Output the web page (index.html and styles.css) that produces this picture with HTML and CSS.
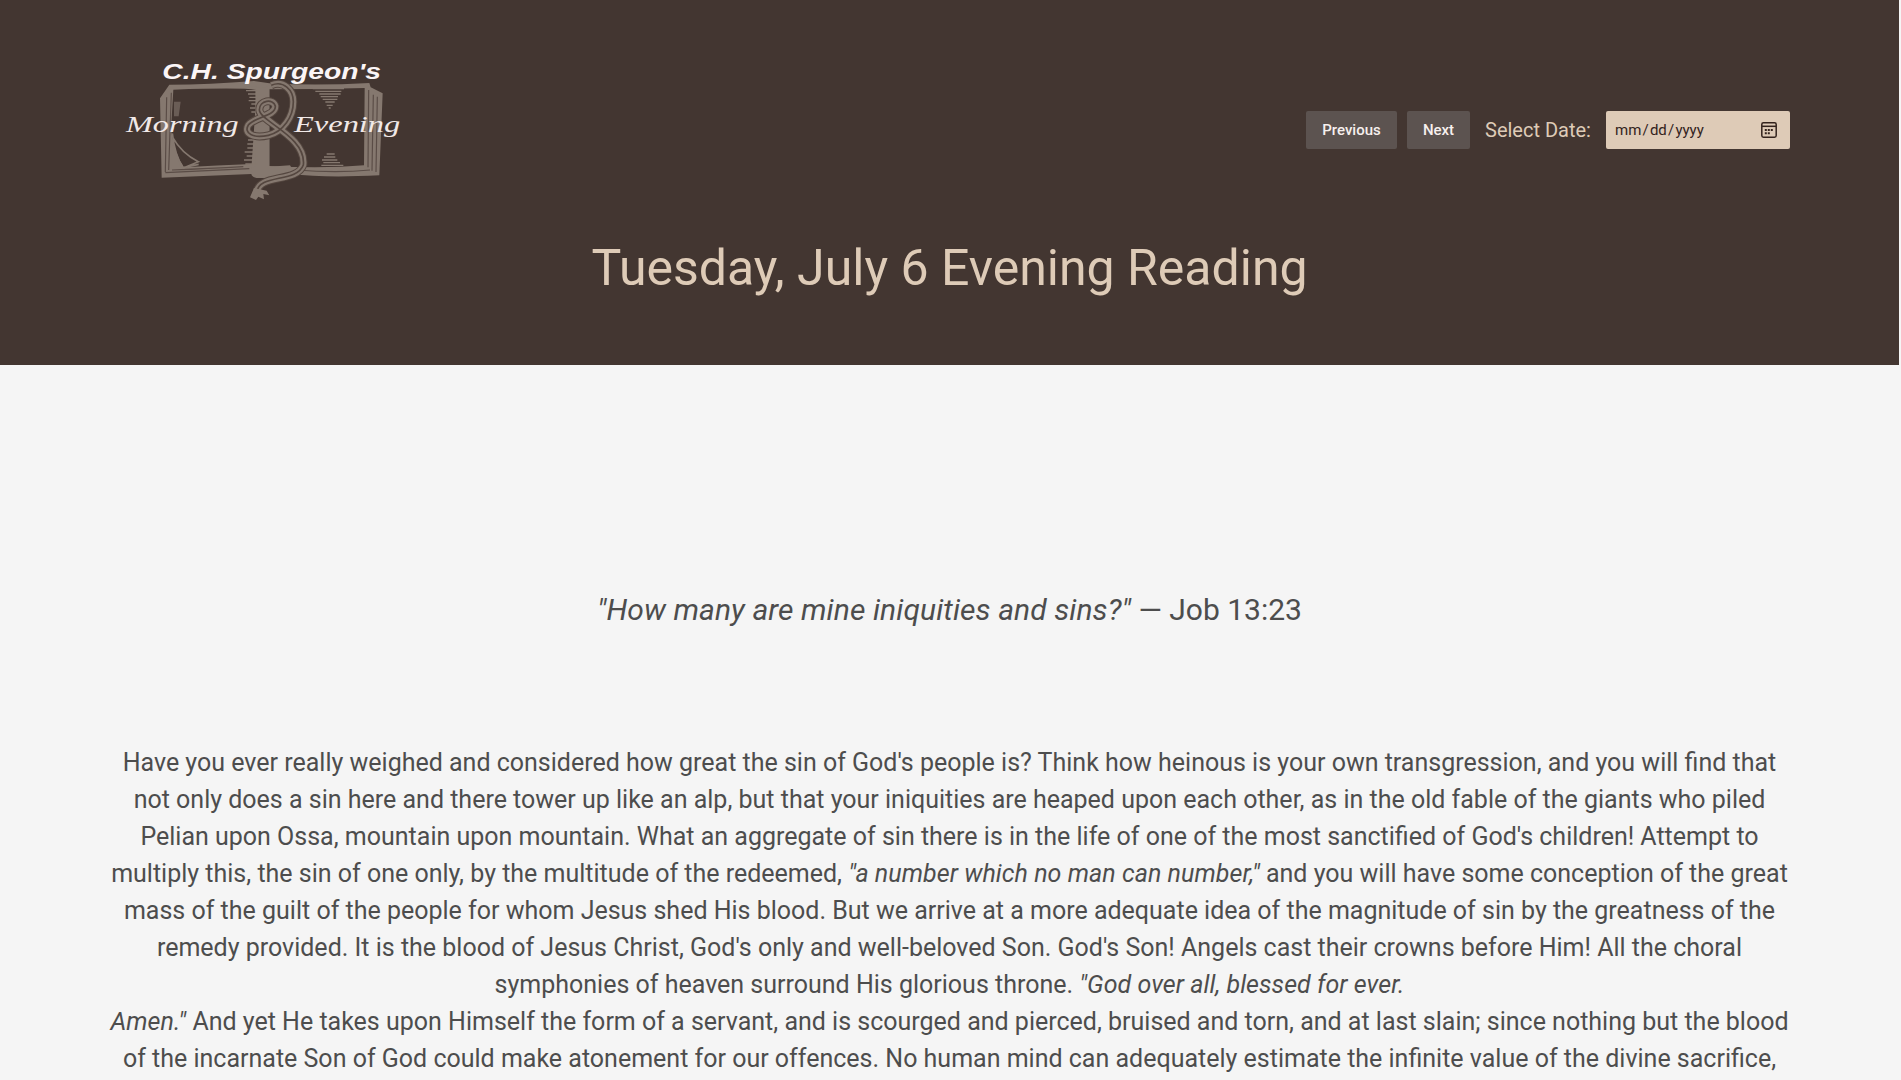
FILE: index.html
```html
<!DOCTYPE html>
<html lang="en">
<head>
<meta charset="utf-8">
<title>Morning and Evening</title>
<link rel="stylesheet" href="styles.css">
</head>
<body>
<header class="header">
  <div class="bar">
    <svg class="logo" viewBox="0 0 930 480" role="img" aria-label="C.H. Spurgeon's Morning &amp; Evening">
      <g class="book">
        <path class="fill" d="M150 145L178 104Q300 104 432 93L478 100Q620 108 778 99L782 112L818 130L808 376Q640 384 545 372Q530 384 450 384Q425 384 424 372L155 383ZM190 119L183 240Q195 315 222 352Q320 346 425 342L440 120Q400 112 190 119ZM478 118V348Q640 356 762 346L764 114Q620 118 478 118Z" fill-rule="evenodd"/>
        <path class="groove" d="M170 142L166 366M184 128L176 360M166 368Q300 362 418 356M186 360Q300 356 400 350M776 120L774 352M790 134L786 362M802 140L798 366M560 360Q680 370 780 360"/>
        <path d="M187 250Q195 320 220 354L265 335Q215 310 188 262M190 285L214 350M222 352L266 343"/>
        <path class="fill" d="M436 108Q455 122 478 106V350L540 346Q560 372 500 372L450 384Q420 376 425 352L438 350Z"/>
        <path class="fill soft" d="M192 155h20l-6 44h-14z"/>
        <path class="hatch" d="M400 112H440M408 122H440M414 132H442M418 142H442M416 152H442M424 162H444M420 174H444M424 186H446M414 270H444M412 282H444M412 294H444M404 306H444M410 318H444M402 330H444M406 342H444M608 116H702M616 124H694M628 132H692M632 140H684M638 148H682M646 156H674M650 166H668M656 174H662M650 312H674M642 321H676M636 330H682M640 338H690M634 346H700"/>
      </g>
      <path class="rim" d="M484 106C520 90 550 120 550 155C550 200 520 245 475 256C430 266 400 250 415 225C435 200 498 198 496 168C490 145 448 150 448 180C450 215 590 260 580 345C560 400 445 370 440 428"/>
      <path class="rope" d="M484 106C520 90 550 120 550 155C550 200 520 245 475 256C430 266 400 250 415 225C435 200 498 198 496 168C490 145 448 150 448 180C450 215 590 260 580 345C560 400 445 370 440 428"/>
      <path class="strand" d="M484 106C520 90 550 120 550 155C550 200 520 245 475 256C430 266 400 250 415 225C435 200 498 198 496 168C490 145 448 150 448 180C450 215 590 260 580 345C560 400 445 370 440 428"/>
      <path class="fill" d="M432 414L470 422L478 436L460 432L462 448L445 440L438 450L420 442Z"/>
      <text class="name" x="157" y="88" textLength="656" lengthAdjust="spacingAndGlyphs">C.H. Spurgeon's</text>
      <text class="script" x="48" y="245" textLength="338" lengthAdjust="spacingAndGlyphs">Morning</text>
      <text class="script" x="552" y="245" textLength="319" lengthAdjust="spacingAndGlyphs">Evening</text>
    </svg>
    <form class="controls">
      <button class="btn prev" type="button">Previous</button>
      <button class="btn next" type="button">Next</button>
      <label class="label" for="date">Select Date:</label>
      <div class="date" id="date">
        <span>mm<i>/</i>dd<i>/</i>yyyy</span>
        <svg class="cal" viewBox="0 0 16 16"><rect x=".8" y=".8" width="14.4" height="14.4" rx="1.6"/><path d="M1 4.3H15"/><path class="dots" d="M6.8 8h2M9.8 8h2M3.8 11.2h2M6.8 11.2h2M3.8 8h2"/></svg>
      </div>
    </form>
  </div>
  <h1 class="title">Tuesday, July 6 Evening Reading</h1>
</header>
<main class="content">
  <p class="verse"><em>"How many are mine iniquities and sins?"</em> — Job 13:23</p>
  <p class="reading">Have you ever really weighed and considered how great the sin of God's people is? Think how heinous is your own transgression, and you will find that<br>
  not only does a sin here and there tower up like an alp, but that your iniquities are heaped upon each other, as in the old fable of the giants who piled<br>
  Pelian upon Ossa, mountain upon mountain. What an aggregate of sin there is in the life of one of the most sanctified of God's children! Attempt to<br>
  multiply this, the sin of one only, by the multitude of the redeemed, <em>"a number which no man can number,"</em> and you will have some conception of the great<br>
  mass of the guilt of the people for whom Jesus shed His blood. But we arrive at a more adequate idea of the magnitude of sin by the greatness of the<br>
  remedy provided. It is the blood of Jesus Christ, God's only and well-beloved Son. God's Son! Angels cast their crowns before Him! All the choral<br>
  symphonies of heaven surround His glorious throne. <em>"God over all, blessed for ever.</em><br>
  <em>Amen."</em> And yet He takes upon Himself the form of a servant, and is scourged and pierced, bruised and torn, and at last slain; since nothing but the blood<br>
  of the incarnate Son of God could make atonement for our offences. No human mind can adequately estimate the infinite value of the divine sacrifice,</p>
</main>
</body>
</html>
```
FILE: styles.css
```css
* { box-sizing: border-box; }
html, body { height: 100%; }
body {
  margin: 0;
  overflow: hidden;
  background: #f5f5f5;
  color: #4d4d4d;
  font-family: Roboto, sans-serif;
}
.header {
  height: 365px;
  margin-right: 2px;
  padding: 50px 109px 0 110px;
  background: #433631;
  color: #decbb7;
}
.bar { display: flex; justify-content: space-between; height: 160px; }
.logo { width: 310px; height: 160px; }
.logo path { fill: none; stroke: #85786f; stroke-width: 5; }
.logo .groove { stroke: #5a4c46; stroke-width: 3.5; }
.logo .fill { fill: #85786f; stroke: none; }
.logo .soft { opacity: .6; }
.logo .hatch { stroke-width: 4; }
.logo .rim { stroke: #54463f; stroke-width: 24; }
.logo .rope { stroke: #85786f; stroke-width: 18; }
.logo .strand { stroke: #54463f; stroke-width: 5; }
.name { fill: #fbf5f6; font: italic 700 64px "Liberation Sans", sans-serif; }
.script { fill: #f1e9e8; font: italic 400 68px "Liberation Serif", serif; }
.controls { display: flex; align-items: center; height: 160px; }
.btn {
  height: 38px;
  padding: 0;
  border: 0;
  border-radius: 2px;
  background: #5c5350;
  color: #f7f0ee;
  font: 500 15px Roboto, sans-serif;
}
.prev { width: 91px; margin-right: 10px; }
.next { width: 63px; margin-right: 15px; }
.label { width: 121px; font-size: 20px; white-space: nowrap; }
.date {
  display: flex;
  align-items: center;
  justify-content: space-between;
  width: 184px;
  height: 38px;
  padding: 0 13px 0 9px;
  border-radius: 2px;
  background: #decbb7;
  color: #33231d;
  font-size: 15px;
}
.date i { padding: 0 1.2px; font-style: normal; }
.cal { width: 16px; height: 16px; fill: none; stroke: #33231d; stroke-width: 1.5; }
.dots { stroke-width: 2; }
.title { margin: 26px 1px 0 0; font-size: 50px; font-weight: 400; line-height: 64px; text-align: center; white-space: nowrap; }
.content { width: 1679px; margin-left: 110px; text-align: center; }
.verse { margin: 0; padding-top: 222px; font-size: 30px; line-height: 46px; white-space: nowrap; }
.verse em { letter-spacing: .09px; }
.reading { margin: 111px 0 0; font-size: 25px; line-height: 37px; white-space: nowrap; }
.reading em { letter-spacing: .06px; }
```
